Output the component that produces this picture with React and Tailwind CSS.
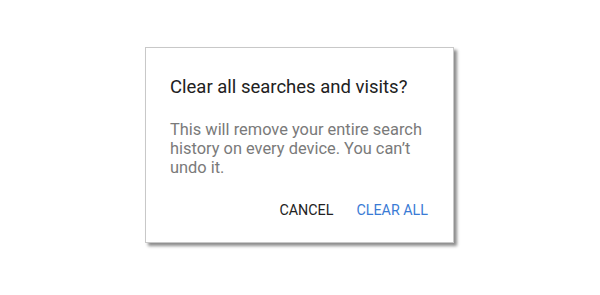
import React from "react";

const App = () => {
  return (
    <div className="w-[600px] h-[295px] bg-white pt-[47px] pl-[145px]" style={{ fontFamily: "Roboto, 'Noto Sans', sans-serif" }}>
      <div className="w-[309px] h-[196px] bg-white border border-[#c8c8c8] shadow-[3px_3px_3px_rgba(0,0,0,0.45)] pl-[24px] pr-[22px] pt-[27px]">
        <h2 className="text-[18.5px] leading-[24px] text-[#212121]">Clear all searches and visits?</h2>
        <p className="mt-[21px] text-[16.4px] leading-[19px] text-[#7a7a7a]">
          This will remove your entire search history on every device. You can’t undo it.
        </p>
        <div className="flex justify-end gap-[23px] mt-[23px] pr-[3px]">
          <button className="text-[14.3px] leading-[20px] text-[#222]">CANCEL</button>
          <button className="text-[14.3px] leading-[20px] text-[#3a7bd5]">CLEAR ALL</button>
        </div>
      </div>
    </div>
  );
};

export default App;
